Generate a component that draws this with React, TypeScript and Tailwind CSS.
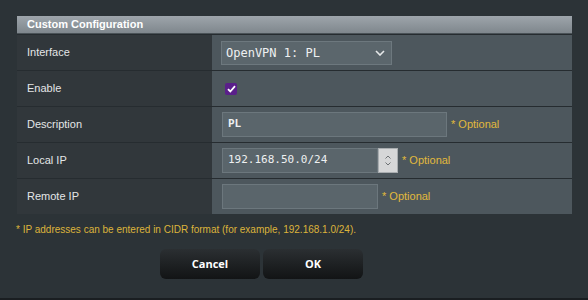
import React from 'react';

const mono = { fontFamily: '"DejaVu Sans Mono", monospace' };

const Row = ({ label, children }: { label: string; children: React.ReactNode }) => (
  <div className="flex h-[36px] border-t border-[#262c30]">
    <div className="w-[195px] shrink-0 bg-[#31373b] flex items-center pl-[10px] text-[11px] text-[#e4e6e7]">
      {label}
    </div>
    <div className="flex-1 bg-[#4d575d] flex items-center pl-[9px]">{children}</div>
  </div>
);

const Optional = () => (
  <span className="ml-[4px] text-[11px] text-[#e1b93c]">* Optional</span>
);

export default function App() {
  return (
    <div
      className="w-[588px] h-[300px] bg-[#2c3337] flex flex-col border-b-[2px] border-[#1a1e21]"
      style={{ fontFamily: '"Liberation Sans", Arial, sans-serif' }}
    >
      <div className="mx-[17px] mt-[16px] w-[555px]">
        <div className="h-[18px] bg-gradient-to-b from-[#9ea5ab] to-[#7f878d] border-b border-[#4a5257] flex items-center pl-[10px] text-[11px] font-bold text-white">
          Custom Configuration
        </div>
        <Row label="Interface">
          <div className="w-[171px] h-[24px] bg-[#5b666c] border border-[#6d787e] flex items-center justify-between pl-[4px] pr-[6px] text-[12px] text-[#eef0f1]" style={mono}>
            <span>OpenVPN 1: PL</span>
            <svg width="10" height="6" viewBox="0 0 10 6" fill="none" stroke="#e6e8e9" strokeWidth="1.6">
              <path d="M1 1l4 4 4-4" />
            </svg>
          </div>
        </Row>
        <Row label="Enable">
          <div className="ml-[4px] w-[12px] h-[12px] rounded-[2px] bg-[#5a1f8a] flex items-center justify-center">
            <svg width="9" height="8" viewBox="0 0 9 8" fill="none" stroke="#fff" strokeWidth="1.8">
              <path d="M1 4.2l2.3 2.3L8 1.2" />
            </svg>
          </div>
        </Row>
        <Row label="Description">
          <div className="ml-[1px] w-[225px] h-[25px] bg-[#5a656b] border border-[#6c777d] flex items-center pl-[5px] text-[11px] font-bold text-[#eef0f1]" style={mono}>
            PL
          </div>
          <Optional />
        </Row>
        <Row label="Local IP">
          <div className="ml-[1px] flex h-[25px]">
            <div className="w-[156px] h-full bg-[#5a656b] border border-[#6c777d] flex items-center pl-[5px] text-[11px] text-[#eef0f1]" style={mono}>
              192.168.50.0/24
            </div>
            <div className="w-[20px] h-full bg-[#d6d7d8] border border-[#a9adb0] flex flex-col items-center justify-center gap-[3px]">
              <svg width="6" height="4" viewBox="0 0 6 4" fill="none" stroke="#6e7275" strokeWidth="1">
                <path d="M0.5 3.5L3 1l2.5 2.5" />
              </svg>
              <svg width="6" height="4" viewBox="0 0 6 4" fill="none" stroke="#6e7275" strokeWidth="1">
                <path d="M0.5 0.5L3 3l2.5-2.5" />
              </svg>
            </div>
          </div>
          <Optional />
        </Row>
        <Row label="Remote IP">
          <div className="ml-[1px] w-[156px] h-[25px] bg-[#5a656b] border border-[#6c777d]" />
          <Optional />
        </Row>
      </div>
      <div className="mx-[16px] mt-[8px] text-[10px] leading-[15px] text-[#dcb43b]">
        * IP addresses can be entered in CIDR format (for example, 192.168.1.0/24).
      </div>
      <div className="mt-[12px] ml-[160px] flex gap-[3px]">
        {['Cancel', 'OK'].map((t) => (
          <button
            key={t}
            className="w-[100px] h-[30px] rounded-[6px] bg-gradient-to-b from-[#2b2f32] to-[#121415] text-white text-[11px] font-bold"
            style={{ fontFamily: '"Open Sans", "Liberation Sans", sans-serif' }}
          >
            {t}
          </button>
        ))}
      </div>
    </div>
  );
}
